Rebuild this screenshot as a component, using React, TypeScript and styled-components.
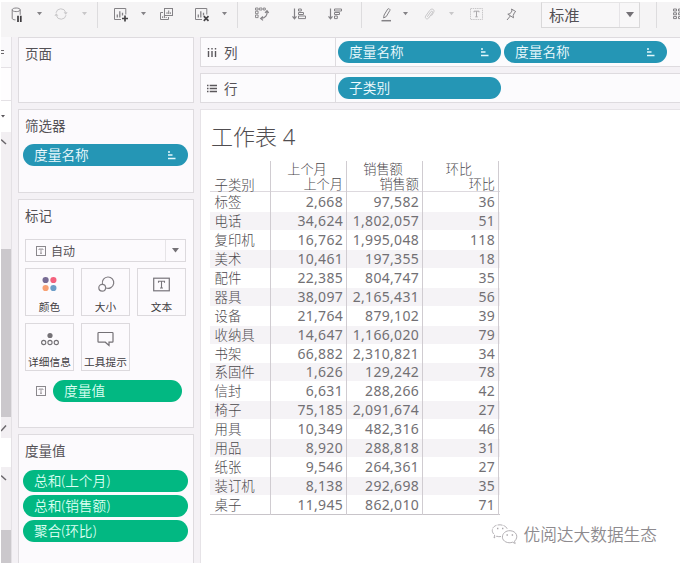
import React from "react";
import styled, { createGlobalStyle } from "styled-components";

const Global = createGlobalStyle`
  * { box-sizing: border-box; }
  html, body { margin: 0; background: #fff; overflow: hidden; }
  body {
    font-family: "Noto Sans", "Noto Sans CJK SC", sans-serif;
    color: #545156;
  }
  svg { display: block; flex: none; overflow: visible; }
`;

const Window = styled.div`
  width: 680px;
  height: 563px;
  padding: 2px 0 0 1px;
  display: flex;
  flex-direction: column;
  overflow: hidden;
  background: #fff;
`;

const Toolbar = styled.div`
  height: 35px;
  flex: none;
  display: flex;
  align-items: flex-start;
  background: #f5f4f5;
`;

const Tool = styled.div<{ $w: number; $gap: number; $dim?: boolean }>`
  width: ${(p) => p.$w}px;
  height: 24px;
  margin-left: ${(p) => p.$gap}px;
  flex: none;
  display: flex;
  align-items: center;
  color: ${(p) => (p.$dim ? "#c8c7c9" : "#848286")};
`;

const Divider = styled.div<{ $gap: number }>`
  width: 1px;
  height: 26px;
  margin-left: ${(p) => p.$gap}px;
  flex: none;
  background: #dddcde;
`;

const FitSelect = styled.div`
  width: 99px;
  height: 26px;
  margin-left: 24px;
  flex: none;
  display: flex;
  border: 1px solid #d9d8d9;
  border-top-color: #e6e5e6;
  background: #f8f7f8;
  font-size: 15.3px;
  line-height: 25px;
`;

const SelectText = styled.div<{ $pad?: number }>`
  flex: 1;
  padding-left: ${(p) => p.$pad ?? 7}px;
  display: flex;
  align-items: center;
  gap: 5px;
  white-space: nowrap;
`;

const SelectArrow = styled.div`
  width: 20px;
  border-left: 1px solid #e6e4e7;
  display: flex;
  align-items: center;
  justify-content: center;
`;

const Workspace = styled.div`
  flex: 1;
  min-height: 0;
  display: flex;
  background: #f4f1f5;
`;

const Rail = styled.div`
  width: 11px;
  flex: none;
  border-right: 1px solid #e4e1e5;
  display: flex;
  flex-direction: column;
`;

const RailPart = styled.div<{ $h: number; $bg: string; $line?: boolean }>`
  height: ${(p) => p.$h}px;
  flex: none;
  background: ${(p) => p.$bg};
  border-bottom: ${(p) => (p.$line ? "1px solid #e4e1e5" : "none")};
  display: flex;
  align-items: center;
  overflow: hidden;
`;

const Cards = styled.div`
  width: 176px;
  margin-left: 6px;
  flex: none;
  display: flex;
  flex-direction: column;
  gap: 6px;
`;

const Card = styled.section<{ $h: number }>`
  height: ${(p) => p.$h}px;
  flex: none;
  border: 1px solid #dedbdf;
  background: #fcfafd;
`;

const CardTitle = styled.h2`
  margin: 6px 0 0 6px;
  font-size: 13.5px;
  line-height: 20px;
  font-weight: 400;
`;

const Pill = styled.div<{ $w: number; $green?: boolean }>`
  width: ${(p) => p.$w}px;
  height: 22px;
  flex: none;
  border-radius: 11px;
  padding: 0 12px 0 11px;
  display: flex;
  align-items: center;
  justify-content: space-between;
  background: ${(p) => (p.$green ? "#02b882" : "#2596b5")};
  color: ${(p) => (p.$green ? "#dcfff2" : "#f0fbfe")};
  font-size: 13.7px;
  line-height: 22px;
  font-weight: 350;
  white-space: nowrap;
`;

const PillStack = styled.div<{ $top: number }>`
  margin: ${(p) => p.$top}px 0 0 4px;
  display: flex;
  flex-direction: column;
  gap: 3px;
`;

const MarkSelect = styled.div`
  width: 161px;
  height: 23px;
  margin: 13px 0 0 6px;
  display: flex;
  border: 1px solid #dcd9dd;
  font-size: 12px;
`;

const MarkGrid = styled.div`
  margin: 6px 0 0 6px;
  display: grid;
  grid-template-columns: repeat(3, 49px);
  grid-auto-rows: 48px;
  gap: 7px;
`;

const MarkButton = styled.div`
  border: 1px solid #dcd9dd;
  display: flex;
  flex-direction: column;
  align-items: center;
  justify-content: space-between;
  padding: 7px 0 0;
  font-size: 10.7px;
  line-height: 15px;
  white-space: nowrap;
  color: #3f3c41;
`;

const MarkPill = styled.div`
  margin: 9px 0 0 17px;
  display: flex;
  align-items: center;
  gap: 7px;
`;

const Main = styled.main`
  flex: 1;
  min-width: 0;
  margin-left: 6px;
  display: flex;
  flex-direction: column;
  gap: 6px;
`;

const Shelf = styled.div`
  height: 30px;
  flex: none;
  display: flex;
  border: 1px solid #dedbdf;
  border-right: 0;
  background: #fcfbfd;
`;

const ShelfName = styled.div`
  width: 135px;
  padding-left: 6px;
  border-right: 1px solid #dedbdf;
  display: flex;
  align-items: center;
  gap: 7px;
  font-size: 13.5px;
`;

const ShelfPills = styled.div`
  display: flex;
  align-items: center;
  padding-left: 2px;
  gap: 3px;
`;

const Sheet = styled.div`
  flex: 1;
  min-height: 0;
  border: 1px solid #e6e3e7;
  border-width: 1px 0 0 1px;
  background: #fff;
  display: flex;
  flex-direction: column;
`;

const SheetTitle = styled.h1`
  margin: 9px 0 0 10px;
  font-size: 22px;
  line-height: 34px;
  height: 34px;
  font-weight: 300;
  color: #504d50;
`;

const Table = styled.div`
  width: 290px;
  margin: 8px 0 0 9px;
  border-bottom: 1px solid #c8c4c9;
  font-weight: 300;
  font-size: 14px;
  color: #4b484c;
`;

const Row = styled.div<{ $band?: boolean }>`
  height: 18.95px;
  line-height: 20px;
  display: grid;
  grid-template-columns: 61px 76px 76px 76px;
  background: ${(p) =>
    p.$band ? "linear-gradient(#fff 1px, #f5f3f6 1px)" : "none"};
`;

const HeadRow = styled(Row)`
  height: 31px;
  border-bottom: 1px solid #ddd9de;
`;

const Label = styled.div<{ $low?: boolean }>`
  padding: ${(p) => (p.$low ? "14px 0 0 4.5px" : "0 0 0 4.5px")};
  border-right: 1px solid #d0ccd1;
  font-size: 13.4px;
  white-space: nowrap;
`;

const Num = styled.div`
  padding-right: 3px;
  border-right: 1px solid #d0ccd1;
  text-align: right;
  font-weight: 400;
  color: #727074;
  letter-spacing: 0.3px;
  white-space: nowrap;
`;

const Head = styled.div`
  padding: 1px 3px 0 0;
  border-right: 1px solid #d0ccd1;
  font-size: 13.2px;
  line-height: 15px;
  display: flex;
  flex-direction: column;
`;

const HeadTop = styled.span`
  align-self: center;
`;

const HeadLow = styled.span`
  align-self: flex-end;
`;

const Credit = styled.div`
  margin: 7px 23px 0 auto;
  display: flex;
  align-items: center;
  gap: 6px;
  font-size: 16.7px;
  line-height: 26px;
  font-weight: 350;
  color: #8d8a8e;
`;

const Caret = ({ size = 5, color = "currentColor" }: { size?: number; color?: string }) => (
  <svg width={size} height={size * 0.65} viewBox="0 0 10 6.5">
    <path d="M0 0h10L5 6.5z" fill={color} />
  </svg>
);

const SortMark = () => (
  <svg width="9" height="9" viewBox="0 0 9 9" stroke="#e4f8fc" strokeWidth="1.3">
    <path d="M1 1h2M1 4h4.5M1 7.5h7.5" />
  </svg>
);

const TextBox = ({ w, h }: { w: number; h: number }) => (
  <svg width={w} height={h} viewBox="0 0 17 14" fill="none" stroke="#77747a">
    <rect x="0.7" y="0.7" width="15.6" height="12.6" strokeWidth="1.2" />
    <path d="M5.5 5.2V3.7h6v1.5M8.5 3.7v6.8M7 10.5h3" strokeWidth="1.1" />
  </svg>
);

const SmallText = () => (
  <svg width="10" height="10" viewBox="0 0 10 10" fill="none" stroke="#8a878c">
    <rect x="0.5" y="0.5" width="9" height="9" />
    <path d="M3 4V3h4v1M5 3v4.3M4 7.3h2" strokeWidth="0.8" />
  </svg>
);

const DatabaseIcon = () => (
  <svg width="12" height="15" viewBox="0 0 12 15" fill="none" stroke="currentColor">
    <path d="M1.200 2.800c0-2.400 8-2.400 8 0s-8 2.400-8 0v8.500c0 1 1.300 1.500 3.300 1.600M9.200 2.800v5" />
    <path d="M7 8.700V15M9.800 8.700V15" stroke="#3c3a3d" strokeWidth="1.700" />
  </svg>
);

const RefreshIcon = () => (
  <svg width="14" height="14" viewBox="0 0 14 14" fill="none" stroke="currentColor">
    <path d="M2 5.8a5 5 0 0 1 9.7-.4M12 8.2a5 5 0 0 1-9.7.4" />
    <path d="M9.6 5.2h4l-1.8 2.5zM.4 8.8h4L2.2 6.3z" fill="currentColor" stroke="none" />
  </svg>
);

const ChartIcon = ({ mark }: { mark: "plus" | "cross" }) => (
  <svg width="15" height="14" viewBox="0 0 15 14" fill="none" stroke="currentColor">
    <path d="M7 12.500H.5V1.500h11.300v6" />
    <path d="M3.300 10.500V7.400M5.800 10.500V4.200M8.500 8.500V5.700" strokeWidth="1.300" />
    <path
      d={mark === "plus" ? "M11 8.500v6M8 11.500h6" : "M8.800 9.200l4.700 4.700M13.500 9.200l-4.700 4.700"}
      stroke="#454346"
      strokeWidth="1.700"
    />
  </svg>
);

const DuplicateIcon = () => (
  <svg width="13" height="12" viewBox="0 0 13 12" fill="none" stroke="currentColor">
    <rect x="4.5" y="0.5" width="8" height="7" />
    <path d="M3 4.500H.5v7h8V9M7 6V4.200M8.700 6V2.500M10.300 6V4.200M2.600 10V8.300M4.400 10V6.800M6.200 10V9" />
  </svg>
);

const SwapIcon = () => (
  <svg width="14" height="14" viewBox="0 0 14 14" fill="none" stroke="currentColor" strokeWidth="0.9">
    <path d="M.5 1h2.600v2H.5zM4.400 1H7v2H4.400zM8.300 1h2v2h-2zM.5 4.200h2.600v2.500H.5zM.5 8h2.600v2.600H.5z" />
    <path d="M12 4.200c.6 4-1.500 6.800-6 7.300M10 5.800l2-2.200 1.700 2.200M8 9.500l-2.300 2L8 13.400" strokeWidth="1.200" />
  </svg>
);

const SortIcon = ({ down }: { down?: boolean }) => (
  <svg width="14" height="12" viewBox="0 0 14 12" fill="none" stroke="currentColor" strokeWidth="1">
    <path d="M2.500.5v10M.5 8.300l2 2.400 2-2.400" strokeWidth="1.200" />
    <path
      d={
        down
          ? "M6.5 1h7v2h-7zM6.5 4.5h5v2h-5zM6.5 8h2.8v2.6H6.5z"
          : "M6.5 1h2.8v2H6.5zM6.5 4.5h5v2h-5zM6.5 8h7v2.6h-7z"
      }
    />
  </svg>
);

const PenIcon = () => (
  <svg width="11" height="15" viewBox="0 0 11 15" fill="none" stroke="currentColor">
    <path d="M2.600 11l.5-3L6.700 2.100c.7-1 2.800 0 2.200 1.300L5.300 9.500z" />
    <path d="M.5 13.700h9.500" strokeWidth="1.500" />
  </svg>
);

const ClipIcon = () => (
  <svg width="11" height="13" viewBox="0 0 11 13" fill="none" stroke="currentColor">
    <path d="M3.300 8.800l3.500-5c1-1.300 2.400-.2 1.600 1L4.700 10c-1.500 2-4.400.3-3-2l4-5.600C7.700-.3 11.300 1.600 9.600 4.500L7.500 7.700" />
  </svg>
);

const LabelIcon = () => (
  <svg width="13" height="12" viewBox="0 0 13 12" fill="none" stroke="currentColor">
    <rect x="0.5" y="0.5" width="12" height="11" strokeDasharray="1.5 0.7" />
    <path d="M4 4.300V3.200h5v1.100M6.500 3.200v5.600M5.300 8.800h2.400" stroke="#aaa8ab" />
  </svg>
);

const PinIcon = () => (
  <svg width="11" height="13" viewBox="0 0 11 13" fill="none" stroke="currentColor">
    <path d="M5.500 1l4.300 2.600-1.300.9-1.300 3 .3 2.300L1.800 6.200l2.300-.5L6 3zM4.300 8L1 12" />
  </svg>
);

const CardsIcon = () => (
  <svg width="8" height="12" viewBox="0 0 8 12" fill="none" stroke="currentColor">
    <path d="M1.500 1h3v2h-3zM1.500 4.800h3v2h-3zM1.500 8.600h3v2h-3zM6.500 1H8M6.500 3H8M6.500 4.800H8M6.500 6.800H8M6.500 8.600H8M6.500 10.600H8M6.500 1v2M6.500 4.800v2M6.500 8.600v2" />
  </svg>
);

const ColorIcon = () => (
  <svg width="15" height="16" viewBox="0 0 15 16">
    <circle cx="3.600" cy="4" r="3.100" fill="#776b94" />
    <circle cx="11.400" cy="4" r="3.100" fill="#f4617d" />
    <circle cx="3.600" cy="12" r="3.100" fill="#f8a073" />
    <circle cx="11.400" cy="12" r="3.100" fill="#6c9dc8" />
  </svg>
);

const SizeIcon = () => (
  <svg width="16" height="16" viewBox="0 0 16 16" fill="none" stroke="#807d82" strokeWidth="1.200">
    <path d="M4.500 8A5.700 5.700 0 1 1 8 12" />
    <circle cx="4.200" cy="11.800" r="3.400" />
  </svg>
);

const DetailIcon = () => (
  <svg width="18" height="15" viewBox="0 0 18 15" fill="none" stroke="#747176" strokeWidth="1.100">
    <circle cx="9" cy="4.500" r="2.600" fill="#747176" stroke="none" />
    <circle cx="2.700" cy="11.500" r="2.100" />
    <circle cx="9" cy="11.500" r="2.100" />
    <circle cx="15.300" cy="11.500" r="2.100" />
  </svg>
);

const TooltipIcon = () => (
  <svg width="17" height="16" viewBox="0 0 17 16" fill="none" stroke="#747176" strokeWidth="1.200">
    <path d="M1.700 1.500h13.600q.7 0 .7.700v8.300q0 .7-.7.700H12v3.300l-3.700-3.300H1.700q-.7 0-.7-.7V2.200q0-.7.700-.7z" />
  </svg>
);

const ColumnsIcon = () => (
  <svg width="10" height="9" viewBox="0 0 10 9" stroke="#5b585c" strokeWidth="1.400">
    <path d="M1.500 0v1.500M5 0v1.500M8.500 0v1.500M1.500 3v6M5 3v6M8.500 3v6" />
  </svg>
);

const RowsIcon = () => (
  <svg width="10" height="9" viewBox="0 0 10 9" stroke="#5b585c" strokeWidth="1.300">
    <path d="M0 1.500h1.500M0 4.500h1.500M0 7.500h1.500M2.700 1.500H10M2.700 4.500H10M2.700 7.500H10" />
  </svg>
);

const ChatIcon = () => (
  <svg width="27" height="21" viewBox="0 0 27 21" fill="none" stroke="#aaa7ab" strokeWidth="0.900">
    <path d="M10 12.500c-1.500.4-3 .2-4.200-.3L3 14l.7-3C-.5 7.500 1 2.200 6.500 1c4.500-.9 9 1.200 9.800 4.200" strokeDasharray="5 1" />
    <path d="M23.500 17.200l.7 2.300-2.600-1.300c-4.600 1.700-10-.7-10.200-5C11.400 9.200 15 6.500 19 6.700c6.500.3 9 6.500 4.500 10.500z" />
    <path d="M6 4.500h1.400M11 4.500h1.400M15.500 11h1.400M20.700 11h1.400" strokeWidth="1.300" />
  </svg>
);

const Tick = ({ up }: { up?: boolean }) => (
  <svg width="6" height="8" viewBox="0 0 6 8" fill="none" stroke="#6a676b" strokeWidth="1.500">
    <path d={up ? "M0 1.500l5 4.500" : "M0 7l5-5.500"} />
  </svg>
);

const headers = ["上个月", "销售额", "环比"];

const rows: [string, string, string, string][] = [
  ["标签", "2,668", "97,582", "36"],
  ["电话", "34,624", "1,802,057", "51"],
  ["复印机", "16,762", "1,995,048", "118"],
  ["美术", "10,461", "197,355", "18"],
  ["配件", "22,385", "804,747", "35"],
  ["器具", "38,097", "2,165,431", "56"],
  ["设备", "21,764", "879,102", "39"],
  ["收纳具", "14,647", "1,166,020", "79"],
  ["书架", "66,882", "2,310,821", "34"],
  ["系固件", "1,626", "129,242", "78"],
  ["信封", "6,631", "288,266", "42"],
  ["椅子", "75,185", "2,091,674", "27"],
  ["用具", "10,349", "482,316", "46"],
  ["用品", "8,920", "288,818", "31"],
  ["纸张", "9,546", "264,361", "27"],
  ["装订机", "8,138", "292,698", "35"],
  ["桌子", "11,945", "862,010", "71"],
];

const marks = [
  { name: "颜色", icon: <ColorIcon /> },
  { name: "大小", icon: <SizeIcon /> },
  { name: "文本", icon: <TextBox w={17} h={17} /> },
  { name: "详细信息", icon: <DetailIcon /> },
  { name: "工具提示", icon: <TooltipIcon /> },
];

export default function App() {
  return (
    <Window>
      <Global />
      <Toolbar>
        <Tool $w={12} $gap={10}><DatabaseIcon /></Tool>
        <Tool $w={5} $gap={14}><Caret /></Tool>
        <Tool $w={14} $gap={12} $dim><RefreshIcon /></Tool>
        <Tool $w={5} $gap={14} $dim><Caret /></Tool>
        <Divider $gap={10} />
        <Tool $w={15} $gap={16}><ChartIcon mark="plus" /></Tool>
        <Tool $w={5} $gap={12}><Caret /></Tool>
        <Tool $w={13} $gap={14}><DuplicateIcon /></Tool>
        <Tool $w={15} $gap={22}><ChartIcon mark="cross" /></Tool>
        <Tool $w={5} $gap={12}><Caret /></Tool>
        <Divider $gap={10} />
        <Tool $w={14} $gap={17}><SwapIcon /></Tool>
        <Tool $w={14} $gap={23}><SortIcon /></Tool>
        <Tool $w={14} $gap={22}><SortIcon down /></Tool>
        <Divider $gap={19} />
        <Tool $w={11} $gap={19}><PenIcon /></Tool>
        <Tool $w={5} $gap={11}><Caret /></Tool>
        <Tool $w={11} $gap={16} $dim><ClipIcon /></Tool>
        <Tool $w={5} $gap={14} $dim><Caret /></Tool>
        <Tool $w={13} $gap={16} $dim><LabelIcon /></Tool>
        <Tool $w={11} $gap={23}><PinIcon /></Tool>
        <FitSelect>
          <SelectText>标准</SelectText>
          <SelectArrow><Caret size={8} color="#747176" /></SelectArrow>
        </FitSelect>
        <Divider $gap={16} />
        <Tool $w={8} $gap={15}><CardsIcon /></Tool>
      </Toolbar>
      <Workspace>
        <Rail>
          <RailPart $h={31} $bg="#faf9fb" $line>
            <svg width="3" height="6" viewBox="0 0 3 6" stroke="#6a676b">
              <path d="M0 1.500h3M0 4.500h3" />
            </svg>
          </RailPart>
          <RailPart $h={33} $bg="#fefdfe" $line />
          <RailPart $h={31} $bg="#fff"><Caret size={4} color="#5a575b" /></RailPart>
          <RailPart $h={20} $bg="#f2eff2"><Tick up /></RailPart>
          <RailPart $h={97} $bg="#f2eff2" />
          <RailPart $h={168} $bg="#cbc8cc" />
          <RailPart $h={21} $bg="#f2eff2"><Tick /></RailPart>
          <RailPart $h={29} $bg="#fff" />
          <RailPart $h={22} $bg="#f2eff2"><Tick up /></RailPart>
          <RailPart $h={41} $bg="#f2eff2" />
          <RailPart $h={33} $bg="#cbc8cc" />
        </Rail>
        <Cards>
          <Card $h={66}>
            <CardTitle>页面</CardTitle>
          </Card>
          <Card $h={84}>
            <CardTitle>筛选器</CardTitle>
            <PillStack $top={8}>
              <Pill $w={165}>度量名称<SortMark /></Pill>
            </PillStack>
          </Card>
          <Card $h={229}>
            <CardTitle>标记</CardTitle>
            <MarkSelect>
              <SelectText $pad={10}><SmallText />自动</SelectText>
              <SelectArrow><Caret size={7} color="#747176" /></SelectArrow>
            </MarkSelect>
            <MarkGrid>
              {marks.map((m) => (
                <MarkButton key={m.name}>
                  {m.icon}
                  <span>{m.name}</span>
                </MarkButton>
              ))}
            </MarkGrid>
            <MarkPill>
              <SmallText />
              <Pill $w={129} $green>度量值</Pill>
            </MarkPill>
          </Card>
          <Card $h={140}>
            <CardTitle>度量值</CardTitle>
            <PillStack $top={9}>
              <Pill $w={165} $green>总和(上个月)</Pill>
              <Pill $w={165} $green>总和(销售额)</Pill>
              <Pill $w={165} $green>聚合(环比)</Pill>
            </PillStack>
          </Card>
        </Cards>
        <Main>
          <Shelf>
            <ShelfName><ColumnsIcon />列</ShelfName>
            <ShelfPills>
              <Pill $w={163}>度量名称<SortMark /></Pill>
              <Pill $w={163}>度量名称<SortMark /></Pill>
            </ShelfPills>
          </Shelf>
          <Shelf>
            <ShelfName><RowsIcon />行</ShelfName>
            <ShelfPills>
              <Pill $w={163}>子类别</Pill>
            </ShelfPills>
          </Shelf>
          <Sheet>
            <SheetTitle>工作表 4</SheetTitle>
            <Table>
              <HeadRow>
                <Label $low>子类别</Label>
                {headers.map((h) => (
                  <Head key={h}>
                    <HeadTop>{h}</HeadTop>
                    <HeadLow>{h}</HeadLow>
                  </Head>
                ))}
              </HeadRow>
              {rows.map(([name, ...values], i) => (
                <Row key={name} $band={i % 2 === 1}>
                  <Label>{name}</Label>
                  {values.map((v, j) => (
                    <Num key={j}>{v}</Num>
                  ))}
                </Row>
              ))}
            </Table>
            <Credit><ChatIcon />优阅达大数据生态</Credit>
          </Sheet>
        </Main>
      </Workspace>
    </Window>
  );
}
